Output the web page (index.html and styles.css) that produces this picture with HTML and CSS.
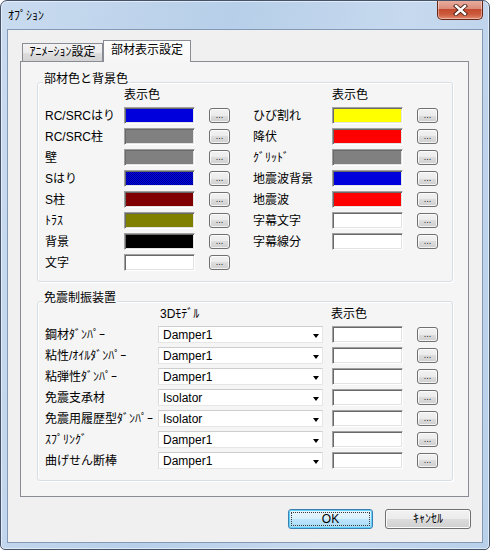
FILE: index.html
```html
<!DOCTYPE html>
<html lang="ja">
<head>
<meta charset="utf-8">
<title>ｵﾌﾟｼｮﾝ</title>
<link rel="stylesheet" href="styles.css">
</head>
<body>
<div class="window">
  <div class="titlebar">
    <span class="title">ｵﾌﾟｼｮﾝ</span>
    <div class="close">
      <svg width="15" height="12" viewBox="0 0 15 12">
        <path d="M3 2 L12 10 M12 2 L3 10" stroke="#4a1d14" stroke-width="4.2" stroke-linecap="square"/>
        <path d="M3 2 L12 10 M12 2 L3 10" stroke="#ffffff" stroke-width="2.4" stroke-linecap="square"/>
      </svg>
    </div>
  </div>
  <div class="client">
    <div class="tabs">
      <div class="tab">ｱﾆﾒｰｼｮﾝ設定</div>
      <div class="tab active">部材表示設定</div>
    </div>
    <div class="panel">
      <div class="group g1">
        <span class="legend">部材色と背景色</span>
        <div class="cgrid">
          <div class="hcell">表示色</div>
          <div class="hcell">表示色</div>

          <div class="crow"><span class="lbl">RC/SRCはり</span><span class="sw" style="background-color:#0000dc"></span><span class="dots">...</span></div>
          <div class="crow"><span class="lbl">ひび割れ</span><span class="sw" style="background-color:#ffff00"></span><span class="dots">...</span></div>

          <div class="crow"><span class="lbl">RC/SRC柱</span><span class="sw" style="background-color:#808080"></span><span class="dots">...</span></div>
          <div class="crow"><span class="lbl">降伏</span><span class="sw" style="background-color:#ff0000"></span><span class="dots">...</span></div>

          <div class="crow"><span class="lbl">壁</span><span class="sw" style="background-color:#808080"></span><span class="dots">...</span></div>
          <div class="crow"><span class="lbl">ｸﾞﾘｯﾄﾞ</span><span class="sw" style="background-color:#808080"></span><span class="dots">...</span></div>

          <div class="crow"><span class="lbl">Sはり</span><span class="sw dither"></span><span class="dots">...</span></div>
          <div class="crow"><span class="lbl">地震波背景</span><span class="sw" style="background-color:#0000dc"></span><span class="dots">...</span></div>

          <div class="crow"><span class="lbl">S柱</span><span class="sw" style="background-color:#800000"></span><span class="dots">...</span></div>
          <div class="crow"><span class="lbl">地震波</span><span class="sw" style="background-color:#ff0000"></span><span class="dots">...</span></div>

          <div class="crow"><span class="lbl">ﾄﾗｽ</span><span class="sw" style="background-color:#808000"></span><span class="dots">...</span></div>
          <div class="crow"><span class="lbl">字幕文字</span><span class="sw" style="background-color:#ffffff"></span><span class="dots">...</span></div>

          <div class="crow"><span class="lbl">背景</span><span class="sw" style="background-color:#000000"></span><span class="dots">...</span></div>
          <div class="crow"><span class="lbl">字幕線分</span><span class="sw" style="background-color:#ffffff"></span><span class="dots">...</span></div>

          <div class="crow"><span class="lbl">文字</span><span class="sw" style="background-color:#ffffff"></span><span class="dots">...</span></div>
          <div class="crow"></div>
        </div>
      </div>

      <div class="group g2">
        <span class="legend">免震制振装置</span>
        <div class="mhead"><span class="h3d">3Dﾓﾃﾞﾙ</span><span>表示色</span></div>
        <div class="mrow"><span class="mlbl">鋼材ﾀﾞﾝﾊﾟｰ</span><span class="combo"><span class="cval">Damper1</span><span class="arrow"></span></span><span class="sw" style="background-color:#ffffff"></span><span class="dots">...</span></div>
        <div class="mrow"><span class="mlbl">粘性/ｵｲﾙﾀﾞﾝﾊﾟｰ</span><span class="combo"><span class="cval">Damper1</span><span class="arrow"></span></span><span class="sw" style="background-color:#ffffff"></span><span class="dots">...</span></div>
        <div class="mrow"><span class="mlbl">粘弾性ﾀﾞﾝﾊﾟｰ</span><span class="combo"><span class="cval">Damper1</span><span class="arrow"></span></span><span class="sw" style="background-color:#ffffff"></span><span class="dots">...</span></div>
        <div class="mrow"><span class="mlbl">免震支承材</span><span class="combo"><span class="cval">Isolator</span><span class="arrow"></span></span><span class="sw" style="background-color:#ffffff"></span><span class="dots">...</span></div>
        <div class="mrow"><span class="mlbl">免震用履歴型ﾀﾞﾝﾊﾟｰ</span><span class="combo"><span class="cval">Isolator</span><span class="arrow"></span></span><span class="sw" style="background-color:#ffffff"></span><span class="dots">...</span></div>
        <div class="mrow"><span class="mlbl">ｽﾌﾟﾘﾝｸﾞ</span><span class="combo"><span class="cval">Damper1</span><span class="arrow"></span></span><span class="sw" style="background-color:#ffffff"></span><span class="dots">...</span></div>
        <div class="mrow"><span class="mlbl">曲げせん断棒</span><span class="combo"><span class="cval">Damper1</span><span class="arrow"></span></span><span class="sw" style="background-color:#ffffff"></span><span class="dots">...</span></div>
      </div>
    </div>
    <div class="actions">
      <button class="btn ok">OK</button>
      <button class="btn cancel">ｷｬﾝｾﾙ</button>
    </div>
  </div>
</div>
</body>
</html>
```

FILE: styles.css
```css
* { box-sizing: border-box; }
html, body { margin: 0; padding: 0; }
body {
  font: 12px/14px "Liberation Sans", "Noto Sans CJK JP", sans-serif;
  color: #000;
  background: #ffffff;
}

.window {
  width: 490px;
  height: 550px;
  display: flex;
  flex-direction: column;
  border: 1px solid #45536a;
  border-radius: 7px 7px 5px 5px;
  background: linear-gradient(100deg, #c9dbef 0%, #b7cfe9 40%, #c6d9ee 70%, #b9d0ea 100%);
  box-shadow: inset 0 0 0 1px rgba(255,255,255,0.55);
  overflow: hidden;
}

.titlebar {
  height: 28px;
  flex: none;
  display: flex;
  align-items: flex-start;
  padding: 8px 0 0 7px;
}
.title { line-height: 14px; }

.close {
  margin: -9px 6px 0 auto;
  width: 46px;
  height: 20px;
  border: 1px solid #6a2517;
  border-top: none;
  border-radius: 0 0 5px 5px;
  background: linear-gradient(#eab0a2 0%, #dc8d7b 45%, #c44a2e 50%, #cc5a3c 75%, #e08a6c 100%);
  box-shadow: inset 0 0 0 1px rgba(255,255,255,0.4);
  display: flex;
  align-items: center;
  justify-content: center;
}

.client {
  flex: 1;
  margin: 0 6px 6px;
  border: 1px solid #8399b5;
  background: #f0f0f0;
  padding: 10px 0 0 12px;
  display: flex;
  flex-direction: column;
}

.tabs {
  display: flex;
  align-items: flex-end;
  height: 21px;
  padding-left: 2px;
}
.tab {
  width: 81px;
  height: 18px;
  border: 1px solid #898c95;
  border-bottom: none;
  background: linear-gradient(#f3f3f3 0%, #ebebeb 50%, #dedede 50%, #d3d3d3 100%);
  line-height: 16px;
  text-align: center;
  white-space: nowrap;
}
.tab.active {
  position: relative;
  z-index: 1;
  width: 88px;
  height: 22px;
  margin-bottom: -1px;
  padding-top: 1px;
  background: linear-gradient(#ffffff, #f6f6f6);
}

.panel {
  width: 449px;
  border: 1px solid #898c95;
  background: #f5f5f5;
  padding: 20px 15px 15px 16px;
}

.group {
  position: relative;
  border: 1px solid #d5dfe5;
  border-radius: 3px;
  box-shadow: inset 1px 1px 0 #ffffff, 1px 1px 0 #ffffff;
  padding: 4px 0 8px 7px;
}
.g2 { margin-top: 19px; padding-bottom: 9px; }

.legend {
  position: absolute;
  top: -11px;
  left: 5px;
  padding: 0 1px;
  background: #f5f5f5;
  line-height: 14px;
  white-space: nowrap;
}

.cgrid {
  display: grid;
  grid-template-columns: 185px 185px;
  column-gap: 23px;
}
.hcell {
  height: 18px;
  line-height: 16px;
  padding-left: 79px;
}
.crow, .mrow {
  height: 21px;
  display: flex;
  align-items: center;
}
.lbl { width: 79px; flex: none; white-space: nowrap; }
.mlbl { width: 113px; flex: none; white-space: nowrap; }

.sw {
  width: 71px;
  height: 17px;
  flex: none;
  border: 1px solid;
  border-color: #a0a0a0 #ffffff #ffffff #a0a0a0;
  box-shadow: inset 1px 1px 0 #696969, inset -1px -1px 0 #e3e3e3;
}
.sw.dither {
  background: repeating-conic-gradient(#0000e6 0 25%, #000090 0 50%) 0 0 / 2px 2px;
}
.mrow .sw { margin-left: 9px; }

.dots {
  width: 21px;
  height: 15px;
  flex: none;
  margin-left: 14px;
  border: 1px solid #707070;
  border-radius: 3px;
  background: linear-gradient(#f2f2f2 0%, #ebebeb 50%, #dddddd 50%, #cfcfcf 100%);
  box-shadow: inset 0 0 0 1px rgba(255,255,255,0.75);
  font: 8px/8px "DejaVu Sans", sans-serif;
  color: #222;
  text-align: center;
  padding-top: 3px;
}

.mhead {
  height: 18px;
  line-height: 16px;
  display: flex;
}
.h3d { margin-left: 115px; width: 171px; }

.combo {
  width: 165px;
  height: 17px;
  flex: none;
  background: #ffffff;
  border: 1px solid;
  border-color: #cdcdcd #e6e6e6 #e6e6e6 #dcdcdc;
  display: flex;
  align-items: center;
  padding: 0 3px 0 4px;
}
.cval { flex: 1; line-height: 14px; }
.arrow {
  width: 0;
  height: 0;
  border-left: 3px solid transparent;
  border-right: 3px solid transparent;
  border-top: 4px solid #000;
  margin-top: 3px;
}

.actions {
  display: flex;
  justify-content: flex-end;
  gap: 12px;
  margin-top: 12px;
  padding-right: 11px;
}
.btn {
  height: 20px;
  border: 1px solid #707070;
  border-radius: 3px;
  background: linear-gradient(#f2f2f2 0%, #ebebeb 50%, #dddddd 50%, #cfcfcf 100%);
  box-shadow: inset 0 0 0 1px #fbfbfb;
  font: 12px/14px "Liberation Sans", "Noto Sans CJK JP", sans-serif;
  color: #000;
  padding: 0;
}
.btn.ok {
  width: 85px;
  border-color: #3c7fb1;
  background: linear-gradient(#eaf6fd 0%, #d9f0fc 50%, #bee6fd 50%, #a7d9f5 100%);
  box-shadow: inset 0 0 0 1px #5fd1fb;
  outline: 1px dotted #3a3a3a;
  outline-offset: -4px;
}
.btn.cancel { width: 86px; }
```
